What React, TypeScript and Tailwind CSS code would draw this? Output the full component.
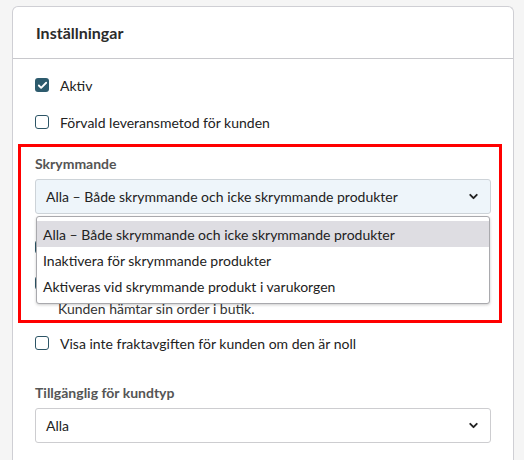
import { ChevronDown, Check } from 'lucide-react';

function Checkbox({ checked, label }: { checked?: boolean; label?: string }) {
  return (
    <div className="flex items-center h-5 gap-[11px]">
      <div
        className={
          checked
            ? 'w-[14px] h-[14px] rounded-[3px] bg-[#2d5b6d] flex items-center justify-center'
            : 'w-[14px] h-[14px] rounded-[3px] border-[1.5px] border-[#2d5566] bg-white'
        }
      >
        {checked && <Check className="w-[11px] h-[11px] text-white" strokeWidth={4} />}
      </div>
      {label && <span className="text-[14px] text-[#222]">{label}</span>}
    </div>
  );
}

const options = [
  'Alla – Både skrymmande och icke skrymmande produkter',
  'Inaktivera för skrymmande produkter',
  'Aktiveras vid skrymmande produkt i varukorgen',
];

export default function App() {
  return (
    <div className="min-h-screen bg-[#f5f5f5] pt-[6px] pl-[12px] overflow-hidden" style={{ fontFamily: 'Lato, "Open Sans", sans-serif' }}>
      <div className="w-[502px] h-[460px] bg-white border border-[#cfcfd4] rounded-t-[6px] border-b-0">
        <div className="h-[52px] border-b border-[#c8c8cc] flex items-center px-[23px]">
          <h2 className="text-[16px] font-bold text-[#2b2b2b]">Inställningar</h2>
        </div>

        <div className="pl-[22px] pr-[22px] pt-[16px] flex flex-col">
          <Checkbox checked label="Aktiv" />
          <div className="mt-[17px]">
            <Checkbox label="Förvald leveransmetod för kunden" />
          </div>

          {/* annotated section */}
          <div className="mt-[12px] ml-[-17px] mr-[-11px] border-[3px] border-[#ff0000] pl-[14px] pr-[8px] pt-[6px] pb-[2px]">
            <div className="h-5 flex items-center text-[14px] font-bold text-[#555]">Skrymmande</div>
            <div className="relative mt-[6px]">
              <div className="h-[35px] rounded-[3px] border border-[#cdd3d8] bg-[#eef5fa] flex items-center justify-between pl-[10px] pr-[10px]">
                <span className="text-[14px] text-[#222]">{options[0]}</span>
                <ChevronDown className="w-[13px] h-[13px] text-[#222]" strokeWidth={3.5} />
              </div>
              <div className="absolute left-[1px] right-[1px] top-[37px] z-10 bg-white border border-[#a9a9ad] rounded-[3px] shadow-[0_1px_3px_rgba(0,0,0,0.2)] py-[4px]">
                {options.map((o, i) => (
                  <div
                    key={o}
                    className={
                      i === 0
                        ? 'h-[26px] flex items-center pl-[6px] text-[14px] text-[#222] bg-[#dedde2]'
                        : 'h-[26px] flex items-center pl-[6px] text-[14px] text-[#222]'
                    }
                  >
                    {o}
                  </div>
                ))}
              </div>
            </div>
            {/* rows hidden under the open list */}
            <div className="mt-[23px]">
              <Checkbox />
            </div>
            <div className="mt-[16px]">
              <Checkbox />
            </div>
            <div className="mt-[5px] h-5 flex items-center pl-[23px] text-[14px] text-[#333]">
              Kunden hämtar sin order i butik.
            </div>
          </div>

          <div className="mt-[10px]">
            <Checkbox label="Visa inte fraktavgiften för kunden om den är noll" />
          </div>

          <div className="mt-[29px] h-5 flex items-center text-[14px] font-bold text-[#555]">Tillgänglig för kundtyp</div>
          <div className="mt-[6px] h-[35px] rounded-[3px] border border-[#cdcdd0] bg-white flex items-center justify-between pl-[10px] pr-[10px]">
            <span className="text-[14px] text-[#222]">Alla</span>
            <ChevronDown className="w-[13px] h-[13px] text-[#222]" strokeWidth={3.5} />
          </div>
        </div>
      </div>
    </div>
  );
}
